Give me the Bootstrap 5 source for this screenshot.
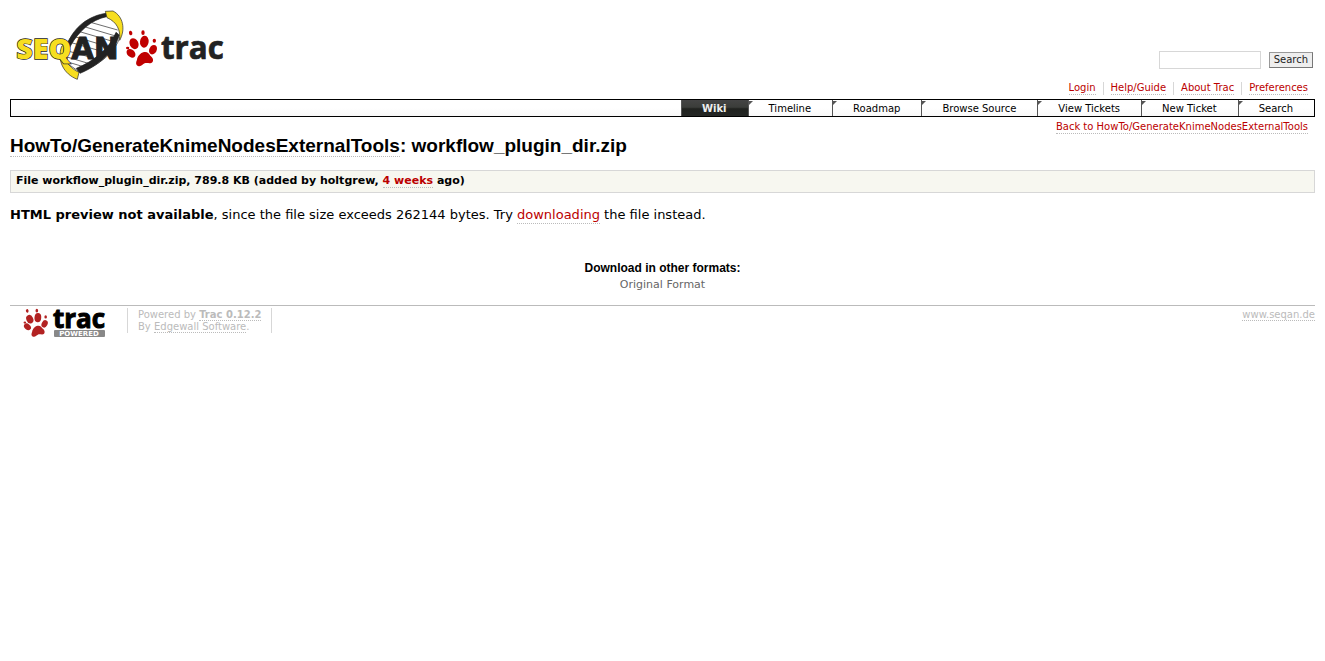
<!DOCTYPE html>
<html lang="en">
<head>
<meta charset="utf-8">
<meta name="viewport" content="width=device-width, initial-scale=1">
<title>workflow_plugin_dir.zip – SeqAn Trac</title>
<link href="https://cdn.jsdelivr.net/npm/bootstrap@5.3.0/dist/css/bootstrap.min.css" rel="stylesheet">
<style>
body{font:13px/18px "DejaVu Sans",sans-serif;color:#000;background:#fff;padding:8px 10px}
a{color:#b00;text-decoration:none;border-bottom:1px dotted #bbb}
.logo-link,.plain-link,.tab-link{border:0}
.logo-link svg{display:block;overflow:visible}
.site-head{min-height:72px}
.find-form{margin:0 2px 11px 0}
.find-box{width:102px;height:18px;border:1px solid #d7d7d7;border-radius:0;padding:0 4px;font-size:10px}
.find-btn{height:16px;border:1px solid #999;border-right-color:#777;border-bottom-color:#777;border-radius:0;background:#eee;color:#222;font:10px/12px "DejaVu Sans",sans-serif;padding:0 4px}
.meta-links{font-size:10px;line-height:12px;padding:2px 7px 0 0}
.meta-links li+li{border-left:1px solid #d7d7d7;padding-left:7px;margin-left:7px}
.meta-links a,.ctx-nav a{display:inline-block;line-height:12px}
.tab-bar{border:1px solid #000;height:18px;font-size:10px;line-height:18px;margin-top:4px;background:linear-gradient(#fff 50%,#f8f8f8)}
.tab-bar li{border-left:1px solid #555}
.tab-link{display:block;position:relative;color:#000;padding:0 21px 0 20px;height:16px}
.tab-link::before{content:"";position:absolute;left:0;top:1px;border-top:4px solid #555;border-right:4px solid transparent}
.tab-link.active{background:linear-gradient(#444 0,#3b3d3a 45%,#20221f 55%,#252725);color:#eee;font-weight:bold}
.tab-link.active::before{display:none}
.ctx-nav{font-size:10px;line-height:12px;padding:4px 7px 0 0}
.page-title{font:bold 19px/22px "Liberation Sans",sans-serif;margin:1px 0 13px}
.page-title a{color:#000;display:inline-block;line-height:21px}
.file-info{border:1px solid #d7d7d7;background:#f7f7f0;padding:0 5px;font:bold 11px/19px "DejaVu Sans",sans-serif;height:23px;margin-bottom:13px}
.file-info a{display:inline-block;line-height:13px}
.notice a{display:inline-block;line-height:16px}
.alt-title{font:bold 12px/16px "Liberation Sans",sans-serif;margin:0 0 1px}
.alt-links{margin-top:36px;font-size:11px;line-height:16px}
.alt-links a{color:#666}
.page-foot{border-top:1px solid #bbb;margin-top:12px;color:#bbb;font-size:10px;line-height:12px;padding-top:2px}
.page-foot a{color:#bbb}
.foot-text{border:solid #d7d7d7;border-width:0 1px;padding:1px 10px 0;margin-left:21px;height:25px}
.foot-text a,.site-link{display:inline-block;line-height:11px}
.site-link{margin-top:1px}
</style>
</head>
<body>
<svg class="d-none" aria-hidden="true"><defs>
<g id="paw"><ellipse cx="20" cy="15" rx="5" ry="7" transform="rotate(-15 20 15)"/><ellipse cx="57" cy="14" rx="5" ry="7"/><ellipse cx="91" cy="38" rx="5" ry="6"/><ellipse cx="11" cy="60" rx="5" ry="4"/>
<ellipse cx="30" cy="47" rx="13" ry="17" transform="rotate(-25 30 47)"/><ellipse cx="61" cy="41" rx="13" ry="18" transform="rotate(6 61 41)"/><ellipse cx="87" cy="65" rx="11" ry="15" transform="rotate(28 87 65)"/><ellipse cx="21" cy="76" rx="11" ry="15" transform="rotate(-48 21 76)"/>
<path d="M60 72C70 70 76 77 79 83C86 88 90 96 85 103C79 109 69 103 62 106C55 109 52 117 42 114C34 110 36 102 39 95C40 86 49 74 60 72Z"/></g>
</defs></svg>
<header>
<div class="site-head d-flex justify-content-between align-items-end">
<a class="logo-link align-self-start ms-1" href="#" aria-label="SeqAn Trac">
<svg width="212" height="72" viewBox="12 9 636 216">
<g stroke="#222" stroke-width="2">
<path d="M289 28C236 34 187 79 169 120L173 176L210 202C278 177 330 128 334 75L320 46Z" fill="#fff"/>
<path d="M245 53l78 22M226 66l94 28M209 80l99 29M194 95l104 31M184 113l99 28M170 137l91 25M171 156l74 22M180 173l50 15" fill="none"/>
<path d="M290 35C244 44 207 78 183 120C174 138 168 150 171 170C158 128 184 82 216 56C240 37 266 28 288 25Z M328 90C316 135 272 179 210 205L199 190C251 169 299 131 318 82Z" fill="#222"/>
<path d="M286 19L309 18C340 34 347 74 329 106C332 75 321 51 291 38Z M164 119C153 155 173 186 207 202L202 223C160 207 140 165 155 124Z" fill="#f7de20"/>
</g>
<text x="19" y="162" font-family="'Open Sans','Noto Sans',sans-serif" font-weight="800" font-size="86" fill="#f7de20" stroke="#222" stroke-width="4" paint-order="stroke">SEQ</text><text x="184" y="162" font-family="'DejaVu Sans',sans-serif" font-weight="bold" font-size="88" fill="#222" stroke="#222" stroke-width="3">AN</text>
<use href="#paw" fill="#c00000" transform="translate(342 69)"/>
<text x="453" y="161" font-family="'Open Sans',sans-serif" font-weight="bold" font-size="94" fill="#222" stroke="#222" stroke-width="2">trac</text>
</svg></a>
<form class="find-form d-flex align-items-center gap-2" onsubmit="return false">
<input class="find-box" type="text" aria-label="Search"><button class="find-btn" type="submit">Search</button>
</form>
</div>
<ul class="meta-links list-unstyled d-flex justify-content-end mb-0">
<li><a href="#">Login</a></li><li><a href="#">Help/Guide</a></li><li><a href="#">About Trac</a></li><li><a href="#">Preferences</a></li>
</ul>
<nav><ul class="tab-bar list-unstyled d-flex justify-content-end mb-0">
<li><a class="tab-link active" href="#">Wiki</a></li><li><a class="tab-link" href="#">Timeline</a></li><li><a class="tab-link" href="#">Roadmap</a></li><li><a class="tab-link" href="#">Browse Source</a></li><li><a class="tab-link" href="#">View Tickets</a></li><li><a class="tab-link" href="#">New Ticket</a></li><li><a class="tab-link" href="#">Search</a></li>
</ul></nav>
</header>
<main>
<div class="ctx-nav text-end"><a href="#">Back to HowTo/GenerateKnimeNodesExternalTools</a></div>
<h1 class="page-title"><a href="#">HowTo/GenerateKnimeNodesExternalTools</a>: workflow_plugin_dir.zip</h1>
<div class="file-info">File workflow_plugin_dir.zip, 789.8 KB (added by holtgrew, <a href="#">4 weeks</a> ago)</div>
<p class="notice mb-0"><strong>HTML preview not available</strong>, since the file size exceeds 262144 bytes. Try <a href="#">downloading</a> the file instead.</p>
<div class="alt-links text-center"><h2 class="alt-title">Download in other formats:</h2><a class="plain-link" href="#">Original Format</a></div>
</main>
<footer class="page-foot d-flex align-items-start">
<a class="logo-link" href="#" aria-label="Trac Powered"><svg width="96" height="32" viewBox="0 0 96 32">
<use href="#paw" fill="#b22222" transform="translate(12 -1) scale(.26)"/>
<text x="43" y="20" font-family="'Open Sans',sans-serif" font-weight="bold" font-size="26" fill="#000" stroke="#000">trac</text>
<rect x="44" y="22" width="51" height="7" rx="1" fill="#888"/><text x="69" y="28" text-anchor="middle" font-family="'DejaVu Sans',sans-serif" font-weight="bold" font-size="7" fill="#fff">POWERED</text></svg></a>
<div class="foot-text">Powered by <a href="#"><strong>Trac 0.12.2</strong></a><br>By <a href="#">Edgewall Software</a>.</div>
<a class="site-link ms-auto" href="#">www.seqan.de</a>
</footer>
<script src="https://cdn.jsdelivr.net/npm/bootstrap@5.3.0/dist/js/bootstrap.bundle.min.js"></script>
</body>
</html>
